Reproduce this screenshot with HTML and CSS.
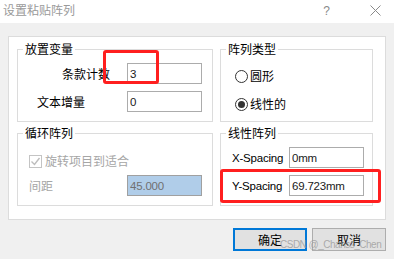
FILE: index.html
```html
<!DOCTYPE html>
<html lang="zh-CN">
<head>
    <meta charset="UTF-8">
    <title>设置粘贴阵列</title>
    <link rel="stylesheet" href="styles.css">
</head>
<body>
    <!-- Title bar -->
    <div class="titlebar">
        <span class="title">设置粘贴阵列</span>
        <span class="help">?</span>
        <svg class="close" width="11" height="11" viewBox="0 0 11 11">
            <path d="M0.5 0.5 L10.5 10.5 M10.5 0.5 L0.5 10.5" stroke="#8a8a8a" stroke-width="1" fill="none"/>
        </svg>
    </div>

    <div class="panel">
        <!-- Placement -->
        <fieldset class="group group-place">
            <legend>放置变量</legend>
            <div class="row">
                <label class="label label-count">条款计数</label>
                <input class="field" type="text" value="3">
            </div>
            <div class="row">
                <label class="label label-step">文本增量</label>
                <input class="field" type="text" value="0">
            </div>
        </fieldset>

        <!-- Array type -->
        <fieldset class="group group-type">
            <legend>阵列类型</legend>
            <div class="radio-row">
                <span class="radio"></span>
                <span>圆形</span>
            </div>
            <div class="radio-row">
                <span class="radio checked"></span>
                <span>线性的</span>
            </div>
        </fieldset>

        <!-- Circular array -->
        <fieldset class="group group-circle">
            <legend>循环阵列</legend>
            <div class="check-row disabled">
                <span class="checkbox">
                    <svg width="11" height="11" viewBox="0 0 11 11">
                        <path d="M1.5 5.5 L4.5 8.5 L9.5 2" stroke="#bdbdbd" stroke-width="1.4" fill="none"/>
                    </svg>
                </span>
                <span>旋转项目到适合</span>
            </div>
            <div class="row">
                <label class="label label-gap disabled">间距</label>
                <input class="field field-selected" type="text" value="45.000">
            </div>
        </fieldset>

        <!-- Linear array -->
        <fieldset class="group group-linear">
            <legend>线性阵列</legend>
            <div class="row">
                <label class="label label-spacing">X-Spacing</label>
                <input class="field" type="text" value="0mm">
            </div>
            <div class="row">
                <label class="label label-spacing">Y-Spacing</label>
                <input class="field" type="text" value="69.723mm">
            </div>
        </fieldset>
    </div>

    <div class="buttons">
        <button type="button" class="btn btn-default">确定</button>
        <button type="button" class="btn">取消</button>
    </div>

    <!-- Annotations over the screenshot -->
    <div class="mark mark-count"></div>
    <div class="mark mark-yspacing"></div>
    <div class="watermark">CSDN @_Chanss_Chen</div>
</body>
</html>
```

FILE: styles.css
```css
/* General */
body {
    margin: 0;
    width: 394px;
    height: 259px;
    background-color: #f0f0f0;
    font-family: "Noto Sans CJK SC", "Noto Sans", sans-serif;
    font-size: 12px;
    color: #000000;
    position: relative;
    overflow: hidden;
}

/* Title bar */
.titlebar {
    height: 23px;
    background-color: #ffffff;
    display: flex;
    align-items: flex-start;
}

.title {
    color: #9a9a9a;
    line-height: 16px;
    padding: 2px 0 0 3px;
    flex: 1;
}

.help {
    color: #8a8a8a;
    font-family: "Liberation Sans", sans-serif;
    font-size: 12px;
    line-height: 14px;
    margin-top: 4px;
    margin-right: 40px;
}

.close {
    margin-top: 5px;
    margin-right: 13px;
}

/* Main white panel */
.panel {
    margin: 13px 8px 0 8px;
    background-color: #ffffff;
    border: 1px solid #dcdcdc;
    padding: 5px 0 13px 8px;
    display: grid;
    grid-template-columns: 196px 153px;
    grid-template-rows: 80px 80px;
    column-gap: 7px;
    row-gap: 4px;
}

.group {
    margin: 0;
    padding: 0;
    min-width: 0;
    border: 1px solid #dcdcdc;
    display: flex;
    flex-direction: column;
}

.group legend {
    font-size: 12px;
    line-height: 14px;
    margin-left: 5px;
    padding: 0 2px;
}

.row {
    display: flex;
    align-items: center;
    height: 21px;
}

.label {
    line-height: 14px;
}

.label-count {
    margin-left: 44px;
    width: 65px;
}

.label-step {
    margin-left: 19px;
    width: 90px;
}

.label-gap {
    margin-left: 11px;
    width: 98px;
}

.label-spacing {
    font-family: "Liberation Sans", sans-serif;
    font-size: 11.5px;
    letter-spacing: -0.2px;
    margin-left: 11px;
    width: 57px;
}

.disabled {
    color: #a6a6a6;
}

.field {
    box-sizing: border-box;
    width: 75px;
    height: 21px;
    border: 1px solid #acacac;
    padding: 0 0 0 2px;
    margin: 0;
    font-family: "Liberation Sans", sans-serif;
    font-size: 11.5px;
    letter-spacing: -0.2px;
    color: #1a1a1a;
    background-color: #ffffff;
    outline: none;
}

.field-selected {
    background-color: #b0cde9;
    border-color: #a0a0a0;
    color: #707070;
}

/* Group spacing */
.group-place legend + .row,
.group-place .row + .row,
.group-linear legend + .row,
.group-linear .row + .row {
    margin-top: 7px;
}

/* Radios */
.radio-row {
    display: flex;
    align-items: center;
    height: 20px;
    margin-left: 14px;
    line-height: 14px;
}

.group-type legend + .radio-row {
    margin-top: 10px;
}

.radio-row + .radio-row {
    margin-top: 8px;
}

.radio {
    box-sizing: border-box;
    width: 13px;
    height: 13px;
    border: 1px solid #333333;
    border-radius: 50%;
    margin-right: 2px;
    display: flex;
    align-items: center;
    justify-content: center;
}

.radio.checked::after {
    content: "";
    width: 7px;
    height: 7px;
    border-radius: 50%;
    background-color: #333333;
}

/* Checkbox */
.check-row {
    display: flex;
    align-items: center;
    height: 20px;
    margin-top: 11px;
    margin-left: 11px;
    line-height: 14px;
}

.checkbox {
    box-sizing: border-box;
    width: 13px;
    height: 13px;
    border: 1px solid #c4c4c4;
    margin-right: 3px;
    display: flex;
    align-items: center;
    justify-content: center;
}

.group-circle .row {
    margin-top: 4px;
}

/* Dialog buttons */
.buttons {
    display: flex;
    justify-content: flex-end;
    gap: 5px;
    margin-top: 8px;
    padding-right: 8px;
}

.btn {
    box-sizing: border-box;
    width: 74px;
    height: 23px;
    background-color: #e1e1e1;
    border: 1px solid #adadad;
    font-family: "Noto Sans CJK SC", sans-serif;
    font-size: 12px;
    color: #000000;
    padding: 0;
}

.btn-default {
    border: 2px solid #0078d7;
}

/* Red annotation boxes */
.mark {
    position: absolute;
    border: 3px solid #ff1f1f;
    border-radius: 3px;
}

.mark-count {
    left: 103px;
    top: 50px;
    width: 50px;
    height: 28px;
}

.mark-yspacing {
    left: 220px;
    top: 169px;
    width: 155px;
    height: 28px;
}

.watermark {
    position: absolute;
    left: 280px;
    top: 239px;
    white-space: nowrap;
    font-family: "Liberation Sans", sans-serif;
    font-size: 10px;
    letter-spacing: -0.5px;
    line-height: 12px;
    color: rgba(150, 150, 150, 0.75);
}
```
